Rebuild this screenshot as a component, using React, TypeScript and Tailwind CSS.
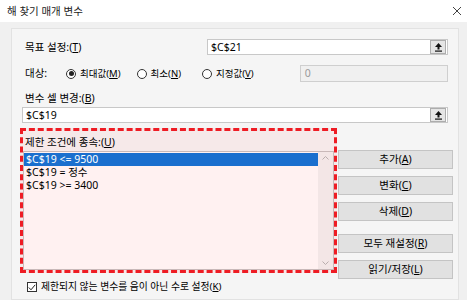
import React from "react";

const font = { fontFamily: '"Noto Sans", "Noto Sans CJK KR", sans-serif' };

function RefButton() {
  return (
    <div className="flex h-[14px] w-[16px] items-center justify-center border border-[#adadad] bg-[#e5e5e5]">
      <svg width="9" height="10" viewBox="0 0 9 10">
        <path d="M4.5 1 L8 5 L5.5 5 L5.5 7.5 L3.5 7.5 L3.5 5 L1 5 Z" fill="#111" />
        <rect x="1" y="8.5" width="7" height="1.2" fill="#111" />
      </svg>
    </div>
  );
}

function Radio({ checked, label, hot }: { checked?: boolean; label: string; hot: string }) {
  return (
    <div className="flex shrink-0 items-center gap-[4px]">
      <div className="flex h-[10px] w-[10px] items-center justify-center rounded-full border border-[#333] bg-white">
        {checked && <div className="h-[5px] w-[5px] rounded-full bg-[#222]" />}
      </div>
      <span className="text-[9.5px]">
        {label}(<u>{hot}</u>)
      </span>
    </div>
  );
}

function Btn({ label, hot }: { label: string; hot: string }) {
  return (
    <div className="flex h-[19px] w-[115px] items-center justify-center border border-[#c4c4c4] bg-[#e1e1e1]">
      <span>
        {label}(<u>{hot}</u>)
      </span>
    </div>
  );
}

export default function App() {
  const rows = ["$C$19 <= 9500", "$C$19 = 정수", "$C$19 >= 3400"];
  return (
    <div
      className="flex h-[300px] w-[467px] flex-col overflow-hidden bg-[#f0f0f0] text-[10.5px] leading-none text-black"
      style={font}
    >
      {/* Title bar */}
      <div className="flex h-[22px] items-center justify-between bg-white pl-[7px] pr-[5px]">
        <span className="text-[10.5px] text-[#222]">해 찾기 매개 변수</span>
        <svg width="10" height="10" viewBox="0 0 10 10">
          <path d="M1 1 L9 9 M9 1 L1 9" stroke="#444" strokeWidth="1" />
        </svg>
      </div>

      {/* Panel */}
      <div className="ml-[11px] mr-[8px] mt-[6px] flex flex-1 flex-col border border-[#e2e2e2] bg-[#f5f5f5] pl-[8px] pr-[5px] pt-[10px]">
        {/* Target */}
        <div className="mr-[5px] flex h-[16px] items-center">
          <span className="ml-[5px] w-[182px]">
            목표 설정:(<u>T</u>)
          </span>
          <div className="flex h-[16px] flex-1 items-center justify-between border border-[#c8c8c8] bg-white pl-[3px] pr-[1px]">
            <span>$C$21</span>
            <RefButton />
          </div>
        </div>

        {/* 대상 */}
        <div className="mr-[5px] mt-[10px] flex h-[17px] items-center">
          <span className="ml-[5px] w-[41px] shrink-0">대상:</span>
          <Radio checked label="최대값" hot="M" />
          <div className="w-[16px] shrink-0" />
          <Radio label="최소" hot="N" />
          <div className="w-[21px] shrink-0" />
          <Radio label="지정값" hot="V" />
          <div className="ml-[46px] flex h-[17px] flex-1 items-center border border-[#cfcfcf] bg-[#f0f0f0] pl-[4px] text-[#9a9a9a]">
            0
          </div>
        </div>

        {/* 변수 셀 변경 */}
        <div className="ml-[5px] mt-[9px] flex h-[14px] items-center">
          변수 셀 변경:(<u>B</u>)
        </div>
        <div className="ml-[2px] mr-[5px] mt-[2px] flex h-[16px] items-center justify-between border border-[#c8c8c8] bg-white pl-[3px] pr-[1px]">
          <span>$C$19</span>
          <RefButton />
        </div>

        {/* Constraints + buttons */}
        <div className="mt-[5px] flex items-start">
          <div className="flex h-[145px] w-[317px] shrink-0 flex-col border-[3px] border-dashed border-[#ee1c24] bg-[#f6e9e9]">
            <div className="ml-[2px] mt-[4px] flex h-[14px] items-center">
              제한 조건에 종속:(<u>U</u>)
            </div>
            <div className="mt-[2px] flex h-[119px] border border-[#c9b9b9] bg-[#fff1f1]">
              <div className="flex flex-1 flex-col pt-[1px]">
                {rows.map((r, i) => (
                  <div
                    key={r}
                    className={
                      i === 0
                        ? "flex h-[13px] items-center bg-[#1a6fce] pl-[2px] text-white"
                        : "flex h-[12.5px] items-center pl-[2px]"
                    }
                  >
                    {r}
                  </div>
                ))}
              </div>
              <div className="flex w-[15px] flex-col items-center justify-between bg-[#f3e6e6] py-[4px]">
                <svg width="7" height="4" viewBox="0 0 7 4">
                  <path d="M0.5 3.5 L3.5 0.5 L6.5 3.5" stroke="#b9adad" fill="none" />
                </svg>
                <svg width="7" height="4" viewBox="0 0 7 4">
                  <path d="M0.5 0.5 L3.5 3.5 L6.5 0.5" stroke="#b9adad" fill="none" />
                </svg>
              </div>
            </div>
          </div>

          <div className="ml-[1px] flex shrink-0 flex-col pt-[22px]">
            <Btn label="추가" hot="A" />
            <div className="mt-[7px]">
              <Btn label="변화" hot="C" />
            </div>
            <div className="mt-[7px]">
              <Btn label="삭제" hot="D" />
            </div>
            <div className="mt-[13px]">
              <Btn label="모두 재설정" hot="R" />
            </div>
            <div className="mt-[7px]">
              <Btn label="읽기/저장" hot="L" />
            </div>
          </div>
        </div>

        {/* Checkbox row */}
        <div className="ml-[7px] mt-[3px] flex items-center gap-[4px]">
          <div className="flex h-[10px] w-[10px] items-center justify-center border border-[#333] bg-white">
            <svg width="8" height="7" viewBox="0 0 8 7">
              <path d="M0.8 3.5 L3 5.8 L7.2 0.8" stroke="#222" strokeWidth="1" fill="none" />
            </svg>
          </div>
          <span className="text-[9.8px]">
            제한되지 않는 변수를 음이 아닌 수로 설정(<u>K</u>)
          </span>
        </div>
      </div>
    </div>
  );
}
